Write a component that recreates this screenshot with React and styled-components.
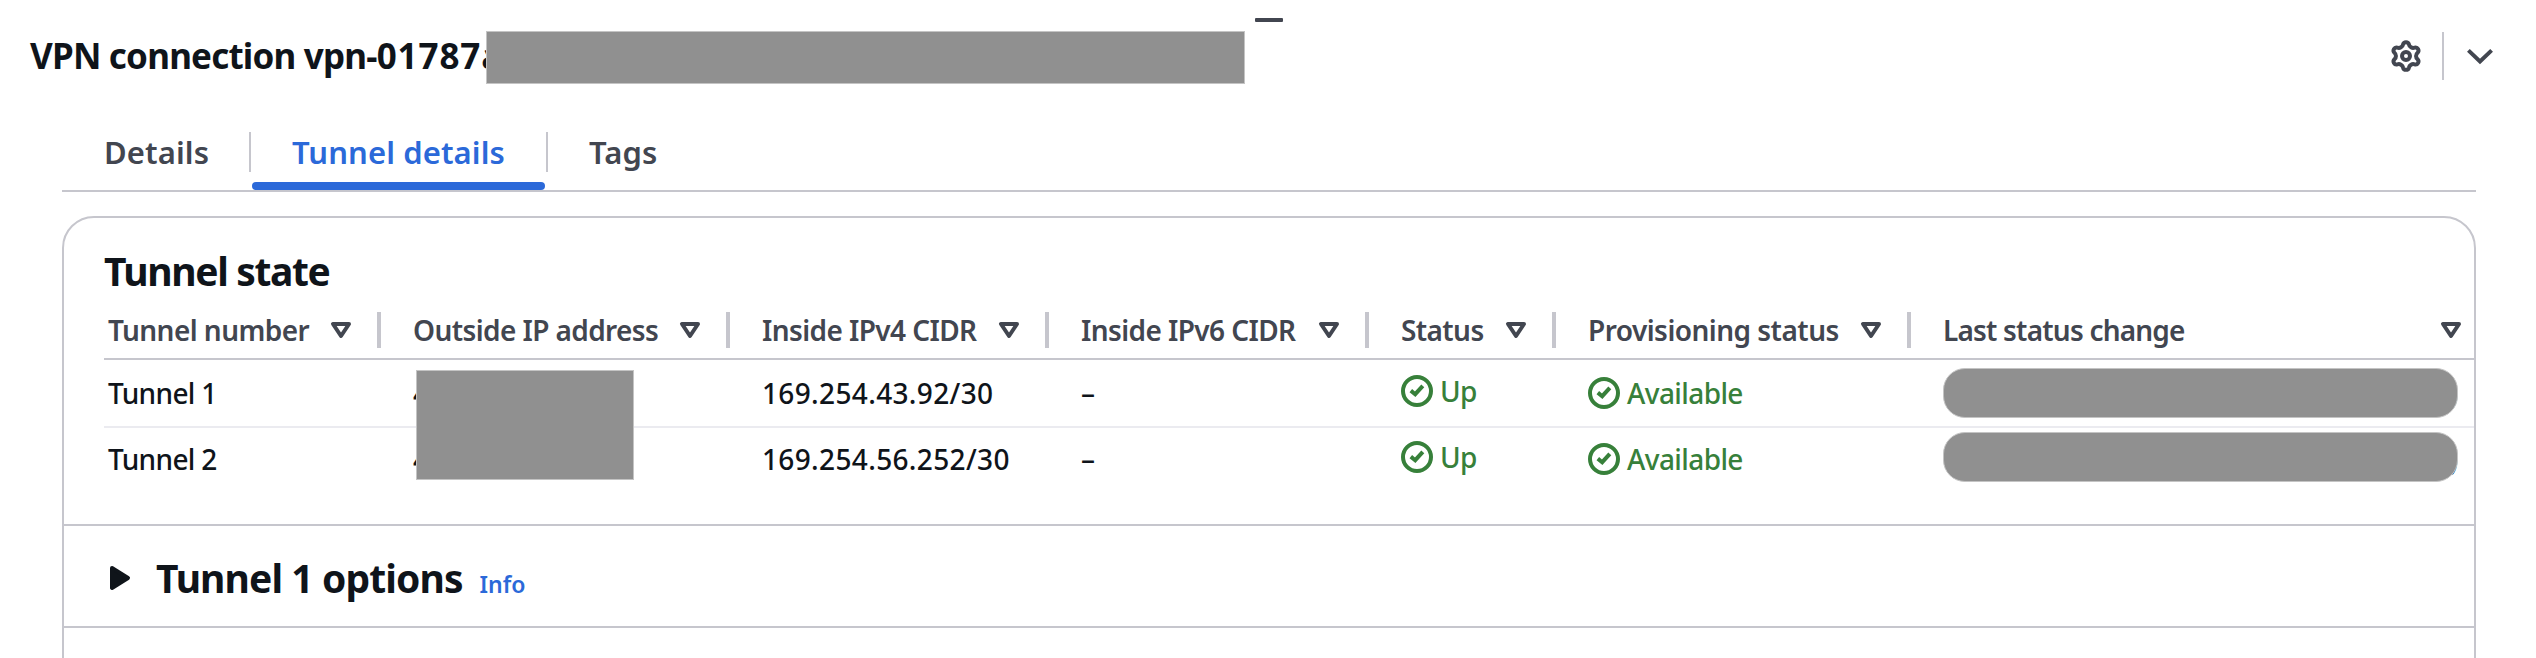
import React, {useState} from 'react';
import styled, {createGlobalStyle, css} from 'styled-components';

const columns = [
  { id: 'number', label: 'Tunnel number', spacing: -0.55 },
  { id: 'outsideIp', label: 'Outside IP address', spacing: -0.6 },
  { id: 'ipv4', label: 'Inside IPv4 CIDR', spacing: -0.6 },
  { id: 'ipv6', label: 'Inside IPv6 CIDR', spacing: -0.6 },
  { id: 'status', label: 'Status', spacing: -0.6 },
  { id: 'provisioning', label: 'Provisioning status', spacing: -0.53 },
  { id: 'lastChange', label: 'Last status change', spacing: -0.8 },
];

const tunnels = [
  { number: 'Tunnel 1', ipv4: '169.254.43.92/30', ipv6: '–', status: 'Up', provisioning: 'Available' },
  { number: 'Tunnel 2', ipv4: '169.254.56.252/30', ipv6: '–', status: 'Up', provisioning: 'Available' },
];

const tabs = ['Details', 'Tunnel details', 'Tags'];

/* icons, all on a 16 grid */

const GearIcon = () => (
  <Icon viewBox="0 0 16 16">
    <path d="M6.55 2.18A1.5 1.5 0 0 1 9.45 2.18A2.2 2.2 0 0 0 12.32 3.83A1.5 1.5 0 0 1 13.77 6.35A2.2 2.2 0 0 0 13.77 9.65A1.5 1.5 0 0 1 12.32 12.17A2.2 2.2 0 0 0 9.45 13.82A1.5 1.5 0 0 1 6.55 13.82A2.2 2.2 0 0 0 3.68 12.17A1.5 1.5 0 0 1 2.23 9.65A2.2 2.2 0 0 0 2.23 6.35A1.5 1.5 0 0 1 3.68 3.83A2.2 2.2 0 0 0 6.55 2.18z" />
    <circle cx="8" cy="8" r="2" />
  </Icon>
);

const ChevronIcon = () => (
  <Icon viewBox="0 0 16 16">
    <path d="M2.2 5.2l5.8 5.5 5.8-5.5" />
  </Icon>
);

const SortIcon = () => (
  <Icon viewBox="0 0 16 16" $round>
    <path d="M4 5h8l-4 6z" />
  </Icon>
);

const CheckIcon = () => (
  <Icon viewBox="0 0 16 16">
    <circle cx="8" cy="8" r="7" />
    <path d="M4.9 7.8l2.2 1.8 3.8-4.2" />
  </Icon>
);

const CaretIcon = () => (
  <Icon viewBox="0 0 16 16" $filled $round>
    <path d="M4 4l8 5-8 5z" />
  </Icon>
);

const App = () => {
  const [activeTab, setActiveTab] = useState('Tunnel details');

  const renderHeader = columns.map((v) => (
    <HeaderCell key={v.id}>
      <HeaderText $spacing={v.spacing}>{v.label}</HeaderText>
      <SortIcon />
    </HeaderCell>
  ));

  const renderRows = tunnels.map((v) => (
    <Row key={v.number}>
      <Cell $spacing={-0.65}>{v.number}</Cell>
      <Cell>4</Cell>
      <Cell $spacing={0.35}>{v.ipv4}</Cell>
      <Cell>{v.ipv6}</Cell>
      <Cell $spacing={-0.6}><Status $raised><CheckIcon />{v.status}</Status></Cell>
      <Cell $spacing={-0.6}><Status><CheckIcon />{v.provisioning}</Status></Cell>
      <Cell><DateValue>)<DateMask /></DateValue></Cell>
    </Row>
  ));

  return (
    <Page>
      <GlobalStyle />
      <DragHandle />
      <Header>
        <Title>VPN connection vpn-<TitleId>01787a</TitleId></Title>
        <TitleMask />
        <Actions>
          <GearIcon />
          <ActionDivider />
          <ChevronIcon />
        </Actions>
      </Header>

      <Tabs>
        {tabs.map((v) => (
          <Tab key={v} $active={v === activeTab} onClick={() => setActiveTab(v)}>{v}</Tab>
        ))}
      </Tabs>

      <Panel>
        <Section>
          <Heading $spacing={-1.35}>Tunnel state</Heading>
          <Table>
            <HeaderRow>{renderHeader}</HeaderRow>
            {renderRows}
            <AddressMask />
          </Table>
        </Section>
        <Options>
          <CaretIcon />
          <OptionsTitle>
            <Heading $spacing={-0.9}>Tunnel 1 options</Heading>
            <Info>Info</Info>
          </OptionsTitle>
        </Options>
      </Panel>
    </Page>
  );
}


const GlobalStyle = createGlobalStyle`
  * {
    box-sizing: border-box;
  }

  body {
    margin: 0;
    background: #fff;
    font-family: "Noto Sans", "Open Sans", sans-serif;
    color: #0f141a;
    overflow: hidden;
  }
`;

const Icon = styled.svg`
  width: 32px;
  height: 32px;
  flex: none;
  fill: ${(p) => p.$filled ? 'currentColor' : 'none'};
  stroke: currentColor;
  stroke-width: 2;
  stroke-linejoin: ${(p) => p.$round ? 'round' : 'miter'};
`;

const Page = styled.div`
  position: relative;
  height: 658px;
  overflow: hidden;
`;

const DragHandle = styled.div`
  position: absolute;
  left: 1255px;
  top: 18px;
  width: 28px;
  height: 4px;
  border-radius: 1px;
  background: #424650;
`;

const Header = styled.div`
  display: flex;
  align-items: center;
  height: 112px;
  padding: 0 40px 0 30px;
`;

const Title = styled.h2`
  margin: 0;
  width: 456px;
  font-size: 35px;
  font-weight: 700;
  line-height: 48px;
  letter-spacing: -0.8px;
  white-space: nowrap;
`;

const TitleId = styled.span`
  letter-spacing: 0.9px;
`;

const TitleMask = styled.div`
  z-index: 1;
  width: 759px;
  height: 53px;
  margin-top: 3px;
  background: #909090;
  border: 1px solid #c4c4c4;
`;

const Actions = styled.div`
  display: flex;
  align-items: center;
  margin-left: auto;
  color: #424650;
`;

const ActionDivider = styled.div`
  width: 2px;
  height: 48px;
  margin: 0 20px;
  background: #c6c6cd;
`;

const Tabs = styled.div`
  display: flex;
  height: 80px;
  margin: 0 60px 0 62px;
  border-bottom: 2px solid #c6c6cd;
`;

const Tab = styled.div`
  position: relative;
  padding: 17px 43px 0 41px;
  font-size: 31px;
  font-weight: 600;
  line-height: 46px;
  letter-spacing: 0.1px;
  color: #424650;
  cursor: pointer;

  &:first-child {
    padding: 17px 42px 0 42px;
  }

  &:not(:last-child)::before {
    content: '';
    position: absolute;
    right: 0;
    top: 20px;
    width: 2px;
    height: 40px;
    background: #c6c6cd;
  }

  ${(p) => p.$active && css`
    color: #2b69d9;

    &::after {
      content: '';
      position: absolute;
      left: 1px;
      right: 3px;
      bottom: 0;
      height: 8px;
      border-radius: 4px;
      background: #2b69d9;
    }
  `}
`;

const Panel = styled.div`
  height: 500px;
  margin: 24px 60px 0 62px;
  border: 2px solid #c6c6cd;
  border-radius: 32px;
`;

const Section = styled.div`
  height: 308px;
  padding: 28px 0 0 40px;
  border-bottom: 2px solid #c6c6cd;
`;

const Heading = styled.h3`
  margin: 0;
  font-size: 39px;
  font-weight: 700;
  line-height: 50px;
  letter-spacing: ${(p) => p.$spacing}px;
`;

const Table = styled.div`
  position: relative;
  margin-top: 1px;
`;

const Row = styled.div`
  display: grid;
  grid-template-columns: 277px 349px 319px 320px 187px 355px 1fr;
  align-items: center;
  height: 68px;
  border-bottom: 2px solid #ebebf0;

  &:nth-child(3) {
    height: 62px;
    border-bottom: none;
  }
`;

const HeaderRow = styled(Row)`
  height: 63px;
  padding-top: 5px;
  border-bottom-color: #c6c6cd;
`;

const Cell = styled.div`
  padding-left: 32px;
  font-size: 28px;
  font-weight: 500;
  line-height: 40px;
  letter-spacing: ${(p) => p.$spacing || 0}px;

  &:first-child {
    padding-left: 4px;
  }
`;

const HeaderCell = styled(Cell)`
  display: flex;
  align-items: center;
  justify-content: space-between;
  height: 36px;
  padding-right: 20px;
  font-weight: 600;
  color: #424650;
  white-space: nowrap;

  &:not(:last-child) {
    border-right: 4px solid #c6c6cd;
  }

  &:last-child {
    padding-right: 7px;
  }
`;

const HeaderText = styled.span`
  letter-spacing: ${(p) => p.$spacing}px;
`;

const Status = styled.div`
  display: flex;
  align-items: center;
  gap: 7px;
  margin-top: ${(p) => p.$raised ? '-4px' : '0'};
  color: #37803a;
`;

const Mask = styled.div`
  background: #909090;
  border: 1px solid #c4c4c4;
`;

const AddressMask = styled(Mask)`
  position: absolute;
  left: 312px;
  top: 73px;
  width: 218px;
  height: 110px;
`;

const DateValue = styled.div`
  position: relative;
  width: 515px;
  text-align: right;
`;

const DateMask = styled(Mask)`
  position: absolute;
  left: 0;
  top: -5px;
  width: 515px;
  height: 50px;
  border-radius: 22px;

  ${Row}:nth-child(3) & {
    top: -7px;
  }
`;

const Options = styled.div`
  display: flex;
  align-items: center;
  height: 102px;
  padding-left: 40px;
  border-bottom: 2px solid #c6c6cd;
`;

const OptionsTitle = styled.div`
  display: flex;
  align-items: baseline;
  margin: 4px 0 0 20px;
`;

const Info = styled.a`
  margin-left: 17px;
  font-size: 23px;
  font-weight: 600;
  color: #2b69d9;
`;


export default App;
